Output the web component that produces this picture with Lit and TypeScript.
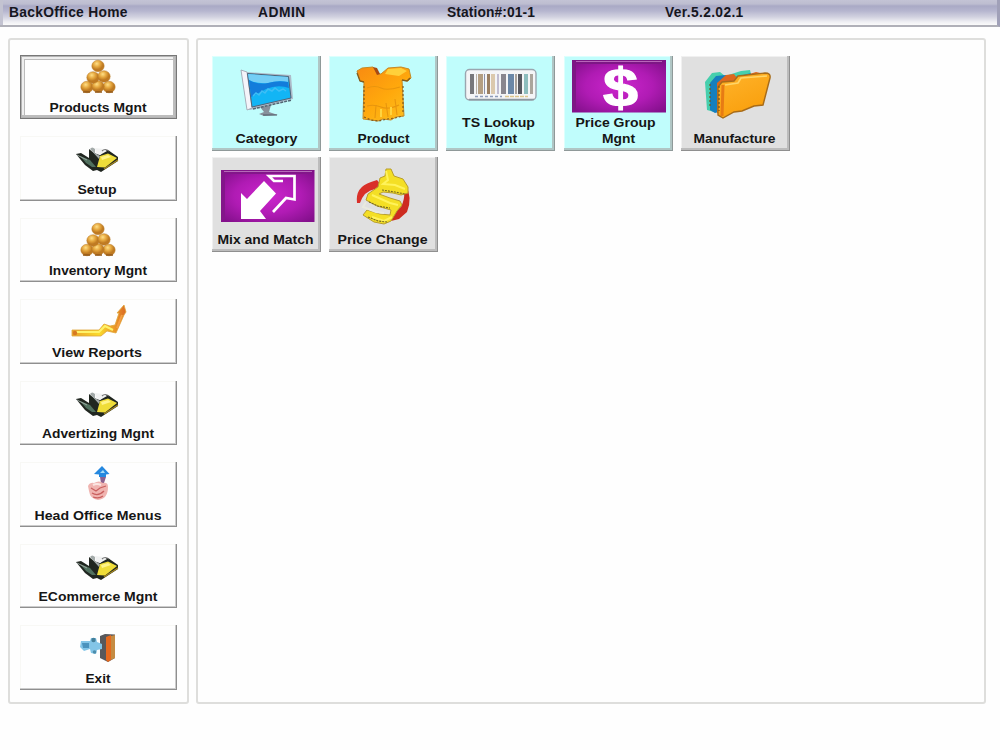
import { LitElement, html, svg, css } from "lit";
import { customElement, property } from "lit/decorators.js";

const pyramid = svg`
  ${[[67, 32], [89, 32], [78, 31.5], [73, 22.5], [84, 21.5], [78, 11]].map(
    ([x, y]) => svg`<ellipse cx=${x} cy=${y} rx="6.2" ry="5.8" fill="url(#gold)" stroke="#b97a24" stroke-width=".5"/>`
  )}
  <path d="M63 37h7M75 37h7M86 37h7" stroke="#94591a" stroke-width="1.3"/>`;

const organizer = svg`
  <path d="M56 18L61 17L69 22L69 13L74 17L80 19L85 14L88 14L98 21L98 25L81 36L77 34L73 35L65 29Z" fill="#202620"/>
  <path d="M60 20L70 24L76 31L72 31L66 27Z" fill="#50705e"/>
  <path d="M57 19l10 5" stroke="#9aa6a0" stroke-width="1"/>
  <path d="M70 13q2-3 5 0v4l5 3l-1 3z" fill="#a3aaa9"/>
  <path d="M75 12L84 13L87 15L80 19L76 17Z" fill="#f1f2f2"/>
  <path d="M82 15q3-3 7 0" fill="none" stroke="#777" stroke-width="1.200"/>
  <path d="M80 20L88 17.500L97 22L85 31.500L77 31Z" fill="#efdd39"/>
  <path d="M81 21l7-2 3 2-9 3z" fill="#fff48a"/>
  <path d="M84 33l14-9" stroke="#a98a20" stroke-width="1.2"/>`;

const chart = svg`
  <path d="M52 31L79 31L84 25L90 27L95 26L99 14L97 14L104 6L106 13L104 16L96 34L87 32L81 37L52 37Z" fill="url(#trend)" stroke="#e0a63a" stroke-width=".8"/>
  <path d="M55 33h24l6-6 8 4" fill="none" stroke="#fff36a" stroke-width="2"/>
  <path d="M97 29l5-13" stroke="#f4a044" stroke-width="2"/>
  <circle cx="55" cy="34" r="2.2" fill="#d77922"/>`;

const head = svg`
  <path d="M82 4L89.500 12L86 12.500L86 15L79 15L79 12.500L74 12Z" fill="#2588df"/>
  <path d="M80 11h5l-2-3z" fill="#a5dcf8"/>
  <path d="M80 15h6l-2 6h-3z" fill="#8c618f"/>
  <path d="M68 24q2-4 6-3q5-3 9 0q5-1 5 4q0 12-10 13q-8-1-9-9z" fill="#f0b4b0"/>
  <path d="M71 26l5 3 4-3 6-2M72 31q6 4 12-2M73 35q6 2 10-1" fill="none" stroke="#c9605f" stroke-width="1.3"/>
  <path d="M73 23q4-2 8 0" fill="none" stroke="#fbe5e2" stroke-width="2"/>`;

const exit = svg`
  <path d="M80 11L85 9L95 9.500L95 33L88 37L80 33Z" fill="#58585b"/>
  <path d="M86 12L91 10L91 35L88 37L86 35Z" fill="#e5691e"/>
  <path d="M91 11L95 10L95 33L91 35Z" fill="#c58c43"/>
  <path d="M61 16L70 16L71 13L76 13L77 17L82 19L82 24L77 25L76 29L71 28L70 24L64 26L60 22Z" fill="#83c5e7"/>
  <path d="M62 18h7v5h-6z" fill="#4b93bd"/>
  <circle cx="73.500" cy="15" r="2.200" fill="#447f99"/>
  <circle cx="74.500" cy="27" r="1.800" fill="#4d8dac"/>`;

const monitor = svg`
  <path d="M48 51L59 49L57 56L66 59L52 60L47 58L52 56Z" fill="#87909b"/>
  <path d="M51 59h14" stroke="#505b66" stroke-width="1"/>
  <path d="M29 14L34 16L79 19L81 43L38 54L35 53Z" fill="#aebbc9"/>
  <path d="M29 14L35 16L40 52L35 54Z" fill="#f4f4fa" stroke="#9c9fac" stroke-width=".8"/>
  <path d="M35.500 17.500L76.500 20.500L79 42L40 51Z" fill="#12b5f5" stroke="#506478" stroke-width="1"/>
  <path d="M36 18L76 21L76 26Q66 24 56 27Q44 28 37 24Z" fill="#75cef5"/>
  <path d="M37 24Q46 29 56 27Q66 24 76 26L77 32Q66 28 54 33L39 41Z" fill="#137cdb"/>
  <path d="M41 40l3-3 3 2 3-4 3 2 3-4 4 2 3-3 4 3 4-2 3 2" fill="none" stroke="#3ebef6" stroke-width="1.500"/>
  <path d="M41 53L80 44" stroke="#526472" stroke-width="1.500" stroke-dasharray="3 1"/>`;

const shirt = svg`
  <path d="M28 15L33 12L44 11L49 18L52 18L59 12L72 11L80 13L82 22L79 25L73 24L75 60L67 61L62 64L54 63L49 65L42 64L34 63L35 26L31 25Z" fill="url(#cloth)" stroke="#c58a25" stroke-width="1"/>
  <path d="M44 11l4 1 3 6-3 1z" fill="#a74a14"/>
  <path d="M59 13L72 12L78 15L70 20L56 18Z" fill="#ffd03a"/>
  <path d="M38 32q8-3 14 0t19-1M47 49l-1 13M57 47l2 14M66 43l2 16M38 50q7-2 14 1t18-2" fill="none" stroke="#e8950d" stroke-width="1.100"/>
  <path d="M52 53v8M62 51v8" stroke="#ffd440" stroke-width="2"/>
  <path d="M28 17l3 8 4 1M81 22l-3 3-5-1" fill="none" stroke="#825b1d" stroke-width="1.300"/>
  <path d="M35 61l7 3 8 1 8-2 8-1 8-2M35 30v28M74 30v28" fill="none" stroke="#825b1d" stroke-width="1.200" stroke-dasharray="2 2"/>`;

const bars: [number, number, string][] = [
  [24, 4, "#77777b"], [30, 1, "#b8b0a8"], [32, 5, "#b49f83"], [38, 1, "#8b91a7"],
  [41, 3, "#9a7f62"], [45, 4, "#dbc9ad"], [51, 2, "#c1bdd0"], [55, 5, "#89868e"],
  [62, 6, "#6a87a7"], [69, 2, "#a8a29d"], [72, 4, "#575961"], [78, 4, "#8dbdbe"], [84, 3, "#aaa59c"],
];
const barcode = svg`
  <rect x="19.500" y="13.500" width="70.500" height="30.500" rx="4" fill="#f4f5f7" stroke="#9aa6b0" stroke-width="1.400"/>
  <path d="M23 43.500H88" stroke="#8b98a0" stroke-width="1.500"/>
  ${bars.map(([x, w, c]) => svg`<rect x=${x} y="18" width=${w} height="20" fill=${c}/>`)}
  <path d="M29 40.500h27" stroke="#8d9bb9" stroke-width="1.400" stroke-dasharray="3 2"/>
  <path d="M59 40.500h23" stroke="#dcc68d" stroke-width="1.400" stroke-dasharray="4 1"/>`;

const dollar = svg`
  <rect x="8" y="4" width="94" height="52.500" fill="url(#violet)"/>
  <path d="M8 56V4h94l-4 4H12v44z" fill="#7d1785"/>
  <path d="M12 5.500h86" stroke="#b966ba"/>
  <text x="39" y="49.500" class="currency" textLength="35" lengthAdjust="spacingAndGlyphs">$</text>`;

const folders = svg`
  <path d="M24 26L31 17L39 16L44 20L60 15L69 14L70 18L53 25L39 52L33 56L26 54Z" fill="#46cfad"/>
  <path d="M29 27L35 20L45 19L50 22L70 17L67 24L45 54L34 57L29 54Z" fill="#157fbe"/>
  <path d="M36 27L45 19L53 18L56 22L75 16L84 18L44 60L36 57Z" fill="#df671e"/>
  <path d="M37 31L41 26L53 25L57 20L84 17Q90 17 89 22L82 49L73 50L61 55L53 56L42 62L37 59Z" fill="url(#folder)" stroke="#a76b19" stroke-width="1.400"/>
  <path d="M44 29L57 27L60 22L86 20" fill="none" stroke="#ffd668" stroke-width="1.700"/>
  <path d="M42 29L41 60" stroke="#e77b14" stroke-width="3"/>
  <path d="M29 28v23M38 30v25" stroke="#71541e" stroke-width="1.200" stroke-dasharray="2 2"/>`;

const swap = svg`
  <rect x="9" y="13" width="93.500" height="52" fill="url(#violet)"/>
  <path d="M9 65V13h93.500l-4 4H13v44z" fill="#83168a"/>
  <path d="M12 14.500h88" stroke="#b56cb8"/>
  <path d="M52 24L64 36.500L48 54L54 62H29V36L35 42Z" fill="#fff"/>
  <path d="M61 55L74 41L82.500 42.500V19H57L62 24H71" fill="none" stroke="#fff" stroke-width="2.700"/>`;

const change = svg`
  <path d="M28 46Q26 30 42 25L48 23L52 28L46 32Q35 34 31 46Z" fill="#d93029"/>
  <path d="M76 27Q84 40 78 55L70 62L62 64L63 54L72 50Q76 42 75 35Z" fill="#cd2b20"/>
  <path d="M57 12L62 12L65 19L74 22L79 30L79 36L72 38L64 36L54 35L50 37L61 41L71 44L73 48L68 54L62 64L55 67L45 65L34 58L38 53L51 57L61 58L62 53L48 49L37 43L39 37L49 30L51 21L56 19Z" fill="#f4df25" stroke="#b89e2c" stroke-width="1"/>
  <path d="M57 14l2 9-5 4 12 1 10 4M43 38l18 8 8 2M43 60l12 4 8-4" fill="none" stroke="#fff35b" stroke-width="2"/>
  <path d="M40 45l9 4 12 2M39 60l10 4 9 1M53 33l13 2 10 2" fill="none" stroke="#776b22" stroke-width="1.100" stroke-dasharray="2 1"/>
  <path d="M37 45l-3 5 13 5 8 1" fill="none" stroke="#e9eadf" stroke-width="2"/>`;

const gradients = svg`<defs>
  <radialGradient id="gold" cx=".4" cy=".3"><stop stop-color="#ffdf87"/><stop offset=".55" stop-color="#e5a73e"/><stop offset="1" stop-color="#bf7a22"/></radialGradient>
  <linearGradient id="trend"><stop stop-color="#e9a12b"/><stop offset=".5" stop-color="#fadb2b"/><stop offset=".75" stop-color="#eda129"/><stop offset="1" stop-color="#db6a25"/></linearGradient>
  <linearGradient id="cloth" x2=".8" y2="1"><stop stop-color="#f98b11"/><stop offset=".6" stop-color="#ffa90c"/><stop offset="1" stop-color="#fcbd1d"/></linearGradient>
  <linearGradient id="folder" x2=".5" y2="1"><stop stop-color="#ffb42c"/><stop offset="1" stop-color="#f99f0c"/></linearGradient>
  <radialGradient id="violet" r=".65"><stop stop-color="#cc25cd"/><stop offset=".55" stop-color="#b01bb4"/><stop offset="1" stop-color="#84108c"/></radialGradient>
</defs>`;

type Entry = { lines: [string, number, number?][]; icon: unknown; tone?: string };

// Each line: text, rendered width, horizontal nudge from the centre.
const menu: Entry[] = [
  { lines: [["Products Mgnt", 97]], icon: pyramid },
  { lines: [["Setup", 39, -1]], icon: organizer },
  { lines: [["Inventory Mgnt", 98]], icon: pyramid },
  { lines: [["View Reports", 90, -1]], icon: chart },
  { lines: [["Advertizing Mgnt", 112]], icon: organizer },
  { lines: [["Head Office Menus", 127]], icon: head },
  { lines: [["ECommerce Mgnt", 119]], icon: organizer },
  { lines: [["Exit", 25]], icon: exit },
];

const tiles: Entry[] = [
  { lines: [["Category", 62]], icon: monitor, tone: "aqua" },
  { lines: [["Product", 52]], icon: shirt, tone: "aqua" },
  { lines: [["TS Lookup", 73, -2], ["Mgnt", 33]], icon: barcode, tone: "aqua" },
  { lines: [["Price Group", 80, -3], ["Mgnt", 33]], icon: dollar, tone: "aqua" },
  { lines: [["Manufacture", 82, -1]], icon: folders, tone: "grey" },
  { lines: [["Mix and Match", 96, -1]], icon: swap, tone: "grey" },
  { lines: [["Price Change", 90, -1]], icon: change, tone: "grey" },
];

@customElement("office-button")
class OfficeButton extends LitElement {
  @property({ attribute: false }) entry!: Entry;
  @property({ type: Boolean, reflect: true }) focused = false;
  @property({ reflect: true }) tone = "";

  static styles = css`
    :host { display: block; }
    .face {
      box-sizing: border-box; width: 100%; height: 100%; padding: 0 0 4px; border: 0;
      display: flex; flex-direction: column; background: #fefefe;
      box-shadow: inset -1px -1px #8f8f8f, inset -2px -2px #cccccc, inset 1px 1px #f8f8f5;
    }
    :host([tone]:not([tone=""])) .face { padding-bottom: 5px; }
    :host([tone="aqua"]) .face { background: #c0fdfc; box-shadow: inset -1px -1px #8f9999, inset -3px -3px #b0c6c5, inset 1px 1px #dcfffd; }
    :host([tone="grey"]) .face { background: #e0e0e0; box-shadow: inset -1px -1px #8f8f8f, inset -3px -3px #bcbcbc, inset 1px 1px #f0f0f0; }
    :host([focused]) .face { box-shadow: inset 0 0 0 1px #777, inset 0 0 0 2px #b4b4b4, inset -4px -4px #bdbdbd, inset 4px 4px #eeeeee, inset 5px 5px #bbb; }
    .icon { display: block; width: 100%; height: 40px; overflow: visible; flex: none; }
    .currency { font: bold 53px "Liberation Sans", sans-serif; fill: #fff; stroke: #fff; stroke-width: 1.2px; }
    .label { display: block; width: 100%; height: 16px; flex: none; overflow: visible; font: bold 13.6px "Liberation Sans", Arial, sans-serif; fill: #161616; }
    .lines { margin-top: auto; }
  `;

  render() {
    const cx = this.tone ? 54.5 : 78;
    return html`<button class="face">
      <svg class="icon" aria-hidden="true">${gradients}${this.entry.icon}</svg>
      <div class="lines">
        ${this.entry.lines.map(([t, w, dx = 0]) => html`<svg class="label"><text x=${cx + dx - w / 2} y="12.5" textLength=${w} lengthAdjust="spacingAndGlyphs">${t}</text></svg>`)}
      </div>
    </button>`;
  }
}

@customElement("app-root")
class AppRoot extends LitElement {
  static styles = css`
    :host { display: block; width: 1000px; height: 750px; overflow: hidden; background: #fefefe; }
    .bar {
      box-sizing: border-box; height: 27px; display: grid; grid-template-columns: 249px 189px 218px 1fr;
      padding: 1px 0 0 9px; border-right: 3px solid #a0a0b8; border-bottom: 2px solid #b0b0b8;
      background: linear-gradient(#c3c3d5 0, #bdbdd0 4px, #a9a9c5 6px, #b6b6cf 11px, #d2d2e0 17px, #f0f0f4 22px, #fafafa 25px);
      box-shadow: inset 3px 0 #c3c3d1;
      font: bold 13.8px/24px "Liberation Sans", Arial, sans-serif; color: #16161e; white-space: nowrap;
    }
    .home { letter-spacing: .3px; }
    .admin { letter-spacing: .5px; }
    .station { letter-spacing: .1px; }
    .version { letter-spacing: .35px; }
    .body { display: flex; gap: 7px; padding: 11px 14px 0 8px; height: 666px; }
    .panel { box-sizing: border-box; border: 2px solid #dededc; border-radius: 3px; }
    .menu { width: 181px; padding: 15px 0 0 9.500px; display: flex; flex-direction: column; gap: 17.1px; }
    .menu office-button { width: 157px; height: 64.4px; }
    .work {
      flex: 1; padding: 16px 0 0 14px; display: grid; grid-template-columns: repeat(5, 109px);
      grid-auto-rows: 94.500px; gap: 6.500px 8.200px; align-content: start;
    }
  `;

  render() {
    return html`
      <header class="bar">
        <span class="home">BackOffice Home</span><span class="admin">ADMIN</span>
        <span class="station">Station#:01-1</span><span class="version">Ver.5.2.02.1</span>
      </header>
      <main class="body">
        <nav class="panel menu">
          ${menu.map((m, i) => html`<office-button .entry=${m} ?focused=${i === 0}></office-button>`)}
        </nav>
        <section class="panel work">
          ${tiles.map((t) => html`<office-button .entry=${t} tone=${t.tone!}></office-button>`)}
        </section>
      </main>`;
  }
}
